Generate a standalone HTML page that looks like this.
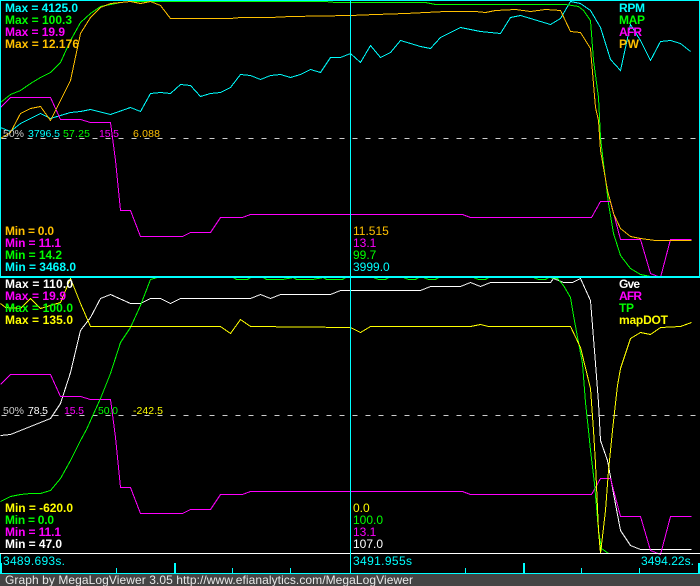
<!DOCTYPE html>
<html><head><meta charset="utf-8"><style>
html,body{margin:0;padding:0;background:#000;width:700px;height:586px;overflow:hidden}
svg{display:block}
text{font-family:"Liberation Sans",Arial,sans-serif;font-size:12px;white-space:pre}
.b{font-weight:bold}
.s{font-size:10.5px}
.c{fill:#00ffff}.g{fill:#00ff00}.m{fill:#ff00ff}.o{fill:#ffc000}.w{fill:#fff}.y{fill:#ffff00}.gr{fill:#ccc}
polyline,line{fill:none;stroke-width:1;shape-rendering:crispEdges}
</style></head><body>
<svg width="700" height="586" viewBox="0 0 700 586" xmlns="http://www.w3.org/2000/svg">
<rect width="700" height="586" fill="#000"/>
<g transform="translate(.5,.5)">
<line x1="1" y1="138" x2="699" y2="138" stroke="#ccc" stroke-dasharray="5 8"/>
<line x1="1" y1="415" x2="699" y2="415" stroke="#ccc" stroke-dasharray="5 8"/>
<polyline stroke="#00ffff" points="0,127 10,131 20,123 40,113 50,118 60,115 70,112 80,111 90,109 110,114 130,107 140,111 150,93 160,92 170,93 180,84 190,85 200,96 210,93 220,92 230,87 240,74 250,75 260,79 270,75 280,74 290,77 300,74 310,69 320,72 330,57 340,57 350,53 360,62 370,45 380,57 390,52 400,40 410,43 420,46 430,48 440,37 450,32 460,27 470,29 480,31 500,33 510,17 520,15 530,18 540,21 550,24 560,18 570,1 580,3 590,10 600,27 610,59 620,70 630,24 640,40 650,60 660,41 670,40 680,43 690,51"/>
<polyline stroke="#00ff00" points="0,102 10,94 20,90 30,83 40,77 50,72 60,62 70,40 80,22 90,13 100,6 110,4 120,2 130,1 275,1 325,1 335,2 425,2 435,4 565,4 578,6 583,10 590,20 593,60 598,97 600,137 603,163 608,203 613,233 620,255 630,268 640,274 650,276 690,276"/>
<polyline stroke="#ff00ff" points="0,107 10,97 50,97 60,119 80,119 90,122 110,122 112,137 115,160 120,210 130,210 140,236 182,236 190,232 210,232 220,217 242,217 250,214 462,214 470,217 591,217 600,201 610,201 620,239 640,239 650,273 660,277 670,239 691,239"/>
<polyline stroke="#ffc000" points="0,138 10,132 20,113 30,108 40,106 50,120 70,80 80,33 90,17 100,7 110,3 130,1 140,3 150,1 160,5 170,18 230,18 240,17 260,17 270,17 290,16 350,15 375,14 405,13 425,12 445,11 475,11 485,12 495,10 515,9 530,11 545,9 560,10 570,31 580,32 590,48 595,107 598,120 600,150 607,190 613,213 620,228 630,236 640,238 655,240 691,240"/>
<polyline stroke="#ffffff" points="0,435 10,434 20,430 50,418 60,403 70,372 80,330 90,317 100,298 110,294 130,303 140,303 150,298 160,298 170,303 180,298 250,298 260,294 270,298 280,294 330,294 340,290 420,290 430,286 460,286 470,282 480,286 490,282 550,282 553,278 563,282 572,282 580,278 590,300 595,363 598,402 600,440 607,460 613,493 620,530 630,545 640,549 691,549"/>
<polyline stroke="#ff00ff" points="0,384 10,374 50,374 60,396 80,396 90,399 110,399 112,414 115,437 120,487 130,487 140,513 182,513 190,509 210,509 220,494 242,494 250,491 462,491 470,494 591,494 600,478 610,478 620,516 640,516 650,550 660,554 670,516 691,516"/>
<polyline stroke="#00ff00" points="0,501 10,496 20,494 30,493 40,493 50,490 60,478 70,460 80,440 86,429 100,398 110,373 120,342 130,327 140,305 150,279 157,277 233,277 236,279 247,279 250,277 263,277 266,279 282,279 293,277 296,279 312,279 323,277 326,279 342,279 345,277 373,277 378,279 385,279 388,277 403,277 408,279 415,279 418,277 423,277 428,279 435,279 438,277 473,277 478,279 485,279 488,277 533,277 538,279 545,279 548,277 557,278 563,285 570,297 573,315 578,342 582,363 585,402 588,430 590,450 594,483 598,530 601,548 608,553"/>
<polyline stroke="#ffff00" points="0,303 5,307 20,308 30,298 40,308 60,302 70,278 80,303 90,326 220,326 230,333 240,319 250,326 350,327 360,332 370,326 470,326 480,324 488,326 570,326 580,347 590,388 593,430 595,463 598,530 600,553 605,510 608,470 612,430 617,385 620,368 630,338 640,332 650,334 660,327 680,326 691,322"/>
</g>
<!-- frames -->
<rect x="0" y="0" width="700" height="1" fill="#00ffff"/>
<rect x="0" y="0" width="1" height="277" fill="#00ffff"/>
<rect x="699" y="0" width="1" height="277" fill="#00ffff"/>
<rect x="0" y="276" width="700" height="2" fill="#00ffff"/>
<rect x="350" y="0" width="1" height="574" fill="#00ffff"/>
<rect x="0" y="553" width="700" height="1" fill="#ffffff"/>
<rect x="350" y="553" width="1" height="1" fill="#00ffff"/>
<rect x="0" y="554" width="1" height="20" fill="#00ffff"/>
<rect x="0" y="573" width="700" height="1" fill="#00ffff"/>
<!-- ticks -->
<g fill="#00ffff">
<rect x="0" y="563" width="2" height="10"/><rect x="174" y="563" width="2" height="10"/><rect x="523" y="563" width="2" height="10"/><rect x="698" y="563" width="2" height="10"/>
<rect x="116" y="568" width="1" height="5"/><rect x="232" y="568" width="1" height="5"/><rect x="290" y="568" width="1" height="5"/><rect x="465" y="568" width="1" height="5"/><rect x="581" y="568" width="1" height="5"/><rect x="639" y="568" width="1" height="5"/>
</g>
<rect x="0" y="574" width="700" height="12" fill="#444"/>
<!-- top panel text -->
<g class="b">
<text x="5" y="12" class="c b" textLength="73">Max = 4125.0</text>
<text x="5" y="24" class="g b" textLength="67">Max = 100.3</text>
<text x="5" y="36" class="m b" textLength="60">Max = 19.9</text>
<text x="5" y="48" class="o b" textLength="74">Max = 12.176</text>
<text x="5" y="235" class="o b" textLength="49">Min = 0.0</text>
<text x="5" y="247" class="m b" textLength="56">Min = 11.1</text>
<text x="5" y="259" class="g b" textLength="57">Min = 14.2</text>
<text x="5" y="271" class="c b" textLength="71">Min = 3468.0</text>
<text x="619" y="12" class="c b" textLength="26">RPM</text>
<text x="619" y="24" class="g b" textLength="26">MAP</text>
<text x="619" y="36" class="m b" textLength="23">AFR</text>
<text x="619" y="48" class="o b" textLength="20">PW</text>
</g>
<text x="353" y="235" class="o">11.515</text>
<text x="353" y="247" class="m">13.1</text>
<text x="353" y="259" class="g">99.7</text>
<text x="353" y="271" class="c">3999.0</text>
<text x="3" y="137" class="s gr" textLength="21">50%</text>
<text x="28" y="137" class="s c" textLength="32">3796.5</text>
<text x="63" y="137" class="s g" textLength="27">57.25</text>
<text x="99" y="137" class="s m" textLength="20">15.5</text>
<text x="133" y="137" class="s o" textLength="27">6.088</text>
<!-- bottom panel text -->
<text x="5" y="288" class="w b" textLength="68">Max = 110.0</text>
<text x="5" y="300" class="m b" textLength="61">Max = 19.9</text>
<text x="5" y="312" class="g b" textLength="68">Max = 100.0</text>
<text x="5" y="324" class="y b" textLength="68">Max = 135.0</text>
<text x="5" y="512" class="y b" textLength="68">Min = -620.0</text>
<text x="5" y="524" class="g b" textLength="49">Min = 0.0</text>
<text x="5" y="536" class="m b" textLength="56">Min = 11.1</text>
<text x="5" y="548" class="w b" textLength="57">Min = 47.0</text>
<text x="619" y="288" class="w b" textLength="21">Gve</text>
<text x="619" y="300" class="m b" textLength="23">AFR</text>
<text x="619" y="312" class="g b" textLength="15">TP</text>
<text x="619" y="324" class="y b" textLength="49">mapDOT</text>
<text x="353" y="512" class="y">0.0</text>
<text x="353" y="524" class="g">100.0</text>
<text x="353" y="536" class="m">13.1</text>
<text x="353" y="548" class="w">107.0</text>
<text x="3" y="414" class="s gr" textLength="21">50%</text>
<text x="28" y="414" class="s w" textLength="20">78.5</text>
<text x="64" y="414" class="s m" textLength="20">15.5</text>
<text x="98" y="414" class="s g" textLength="20">50.0</text>
<text x="133" y="414" class="s y" textLength="30">-242.5</text>
<!-- axis -->
<text x="3" y="565" class="c" textLength="62">3489.693s.</text>
<text x="353" y="565" class="c" textLength="59">3491.955s</text>
<text x="641" y="565" class="c" textLength="53">3494.22s.</text>
<text x="5" y="584" fill="#e8e8e8" textLength="408">Graph by MegaLogViewer 3.05 http://www.efianalytics.com/MegaLogViewer</text>
</svg>
</body></html>
